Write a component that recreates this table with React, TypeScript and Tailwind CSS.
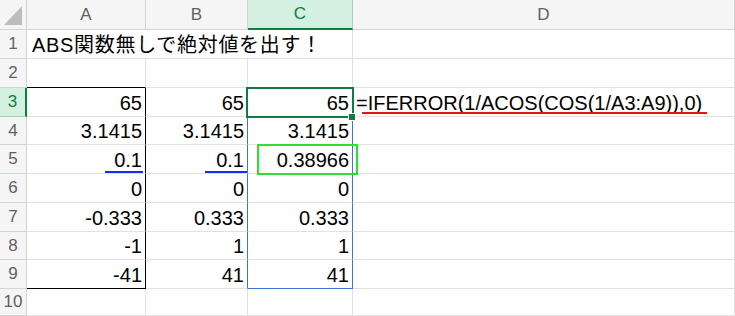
import React from "react";

type Row = { n: number; h: string; a?: string; b?: string; c?: string };

const rows: Row[] = [
  { n: 1, h: "h-[29px]" },
  { n: 2, h: "h-[29px]" },
  { n: 3, h: "h-[29px]", a: "65", b: "65", c: "65" },
  { n: 4, h: "h-[28px]", a: "3.1415", b: "3.1415", c: "3.1415" },
  { n: 5, h: "h-[29px]", a: "0.1", b: "0.1", c: "0.38966" },
  { n: 6, h: "h-[29px]", a: "0", b: "0", c: "0" },
  { n: 7, h: "h-[29px]", a: "-0.333", b: "0.333", c: "0.333" },
  { n: 8, h: "h-[28px]", a: "-1", b: "1", c: "1" },
  { n: 9, h: "h-[29px]", a: "-41", b: "41", c: "41" },
  { n: 10, h: "h-[27px]" },
];

const cellBase =
  "flex items-end justify-end pr-[3px] pb-[1px] border-r border-b border-[#e1e1e1] text-[20px] leading-[24px] text-black whitespace-nowrap";

const ColHeader = ({ label, selected }: { label: string; selected?: boolean }) =>
  selected ? (
    <div className="h-[30px] flex items-center justify-center bg-[#d3f0e0] text-[#107c41] border-r border-r-[#9fd5b7] border-b-2 border-b-[#107c41] text-[17px]">
      {label}
    </div>
  ) : (
    <div className="h-[30px] flex items-center justify-center bg-[#f5f5f5] text-[#616161] border-r border-b border-[#d4d4d4] text-[17px]">
      {label}
    </div>
  );

const RowHeader = ({ n, h }: { n: number; h: string }) =>
  n === 3 ? (
    <div className={`${h} flex items-center justify-center bg-[#d3f0e0] text-[#107c41] border-b border-b-[#9fd5b7] border-r-2 border-r-[#107c41] text-[17px]`}>
      {n}
    </div>
  ) : (
    <div className={`${h} flex items-center justify-center bg-[#f5f5f5] text-[#616161] border-r border-b border-[#d4d4d4] text-[17px]`}>
      {n}
    </div>
  );

// cell borders set on the ranges A3:A9 (black) and C3:C9 (blue)
function borderA(n: number) {
  if (n === 2) return "border-b-black";
  if (n >= 3 && n <= 8) return "border-r-black";
  if (n === 9) return "border-r-black border-b-black";
  return "";
}

function borderB(n: number) {
  if (n >= 3 && n <= 9) return "border-r-[#3d73d6]";
  return "";
}

function borderC(n: number) {
  if (n === 2) return "border-b-[#3d73d6]";
  if (n >= 3 && n <= 8) return "border-r-[#3d73d6]";
  if (n === 9) return "border-r-[#3d73d6] border-b-[#3d73d6]";
  return "";
}

export default function App() {
  return (
    <div
      className="w-[735px] h-[316px] overflow-hidden bg-white"
      style={{ fontFamily: '"Liberation Sans", "Noto Sans CJK JP", sans-serif' }}
    >
      <div className="relative grid grid-cols-[27px_119px_102px_105px_382px]">
        {/* corner */}
        <div className="h-[30px] bg-[#f5f5f5] border-r border-b border-[#d4d4d4] flex items-end justify-end pr-[4px] pb-[4px]">
          <svg width="18" height="19" viewBox="0 0 18 19">
            <polygon points="18,0 18,19 0,19" fill="#bdbdbd" />
          </svg>
        </div>
        <ColHeader label="A" />
        <ColHeader label="B" />
        <ColHeader label="C" selected />
        <ColHeader label="D" />

        {rows.map((r) => (
          <React.Fragment key={r.n}>
            <RowHeader n={r.n} h={r.h} />
            {r.n === 1 ? (
              <>
                <div className={`${r.h} col-span-3 flex items-end pl-[5px] pb-[1px] border-r border-b border-[#e1e1e1] text-[20px] leading-[24px] tracking-[0.7px] whitespace-nowrap`}>
                  ABS関数無しで絶対値を出す！
                </div>
                <div className={`${r.h} ${cellBase}`} />
              </>
            ) : (
              <>
                <div className={`${r.h} ${cellBase} ${borderA(r.n)}`}>{r.a}</div>
                <div className={`${r.h} ${cellBase} ${borderB(r.n)}`}>{r.b}</div>
                <div className={`${r.h} ${cellBase} ${borderC(r.n)}`}>{r.c}</div>
                <div className={`${r.h} flex items-end pl-[3px] pb-[1px] border-r border-b border-[#e1e1e1] text-[20px] leading-[24px] whitespace-nowrap`}>
                  {r.n === 3 ? "=IFERROR(1/ACOS(COS(1/A3:A9)),0)" : ""}
                </div>
              </>
            )}
          </React.Fragment>
        ))}

        {/* active cell C3 with fill handle */}
        <div className="absolute left-[246px] top-[87px] w-[108px] h-[31px] border-2 border-[#107c41]" />
        <div className="absolute left-[348px] top-[113px] w-[8px] h-[8px] bg-[#107c41] border border-white" />

        {/* green shape around C5 */}
        <div className="absolute left-[257px] top-[144px] w-[101px] h-[31px] border-2 border-[#2ee02e]" />

        {/* blue underlines */}
        <div className="absolute left-[105px] top-[171px] w-[38px] h-[2px] bg-[#1030e8]" />
        <div className="absolute left-[205px] top-[171px] w-[42px] h-[2px] bg-[#1030e8]" />

        {/* red underline */}
        <div className="absolute left-[362px] top-[112px] w-[345px] h-[2px] bg-[#e8141c]" />
      </div>
    </div>
  );
}
